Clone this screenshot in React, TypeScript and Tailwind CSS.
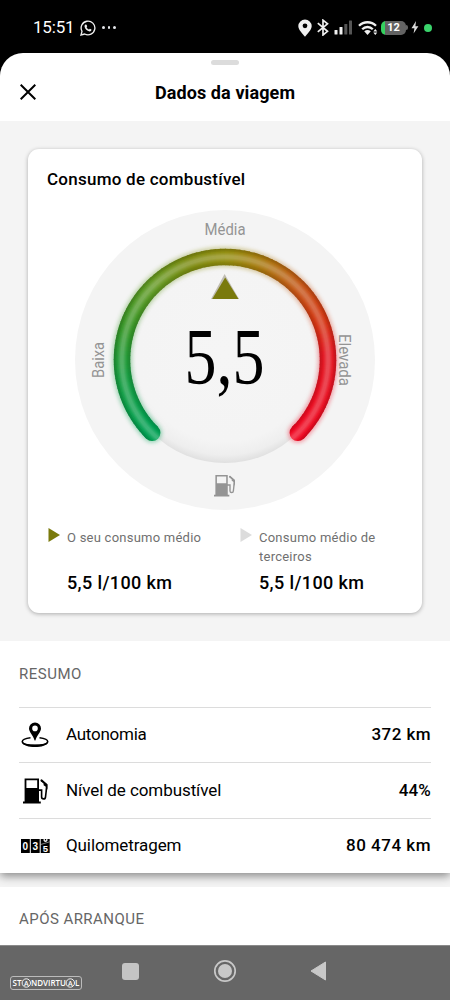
import type { ReactNode } from "react";

type RowData = {
  icon: ReactNode;
  label: string;
  value: string;
  labelClass: string;
  valueClass: string;
};

const CX = 153;
const CY = 153;
const R = 103;

// angle in degrees clockwise from the top
const STOPS: [number, number[]][] = [
  [-136, [0, 160, 84]],
  [-100, [24, 156, 64]],
  [-75, [52, 150, 40]],
  [-45, [98, 152, 34]],
  [-20, [125, 138, 16]],
  [0, [146, 140, 14]],
  [18, [166, 122, 14]],
  [45, [196, 84, 22]],
  [68, [212, 52, 20]],
  [85, [226, 24, 34]],
  [136, [240, 8, 34]],
];

function colorAt(a: number) {
  for (let i = 1; i < STOPS.length; i++) {
    const [a1, c1] = STOPS[i];
    const [a0, c0] = STOPS[i - 1];
    if (a <= a1) {
      const t = (a - a0) / (a1 - a0);
      return `rgb(${c0.map((v, k) => Math.round(v + (c1[k] - v) * t)).join(",")})`;
    }
  }
  return "rgb(240,8,34)";
}

function point(a: number) {
  const rad = (a * Math.PI) / 180;
  return `${(CX + R * Math.sin(rad)).toFixed(2)} ${(CY - R * Math.cos(rad)).toFixed(2)}`;
}

function arc(from: number, to: number) {
  return `M${point(from)} A${R} ${R} 0 ${to - from > 180 ? 1 : 0} 1 ${point(to)}`;
}

const START = -135;
const STEP = 2.5;
const segments = Array.from({ length: 108 }, (_, i) => START + i * STEP);

function ArcSegments({ width }: { width: number }) {
  return (
    <g fill="none" strokeWidth={width}>
      <path d={arc(-135, -134)} stroke={colorAt(-135)} strokeLinecap="round" />
      <path d={arc(134, 135)} stroke={colorAt(135)} strokeLinecap="round" />
      {segments.map((a) => (
        <path key={a} d={arc(a, Math.min(a + STEP + 0.5, 135))} stroke={colorAt(a)} />
      ))}
    </g>
  );
}

function Gauge() {
  return (
    <svg width="306" height="306" viewBox="0 0 306 306" className="block" fontFamily="Roboto, sans-serif">
      <defs>
        <radialGradient id="disc" gradientUnits="userSpaceOnUse" cx={CX} cy={CY - 8} r="112">
          <stop offset="0" stopColor="#f5f5f5" />
          <stop offset="0.8" stopColor="#f4f4f4" />
          <stop offset="0.92" stopColor="#eeeeee" />
          <stop offset="1" stopColor="#dedede" />
        </radialGradient>
        <radialGradient id="tube" gradientUnits="userSpaceOnUse" cx={CX} cy={CY} r="111.5">
          <stop offset="0.845" stopColor="#000" stopOpacity="0.16" />
          <stop offset="0.875" stopColor="#000" stopOpacity="0.04" />
          <stop offset="0.885" stopColor="#fff" stopOpacity="0.03" />
          <stop offset="0.915" stopColor="#fff" stopOpacity="0.22" />
          <stop offset="0.935" stopColor="#fff" stopOpacity="0.22" />
          <stop offset="0.965" stopColor="#fff" stopOpacity="0.02" />
          <stop offset="0.975" stopColor="#000" stopOpacity="0.06" />
          <stop offset="1" stopColor="#000" stopOpacity="0.18" />
        </radialGradient>
        <filter id="glow" x="-10%" y="-10%" width="120%" height="120%">
          <feGaussianBlur stdDeviation="2" />
        </filter>
      </defs>
      <circle cx={CX} cy={CY} r="150" fill="#f4f4f4" />
      <circle cx={CX} cy={CY} r={R} fill="url(#disc)" />
      <g filter="url(#glow)" opacity="0.4">
        <ArcSegments width={19.5} />
      </g>
      <ArcSegments width={16.5} />
      <path d={arc(-135, 135)} fill="none" stroke="url(#tube)" strokeWidth="16.5" strokeLinecap="round" />

      <path d="M152.6 67 L167 92 H139 Z" fill="#c0bdb2" />
      <path d="M153.2 70.5 L166.5 92 H140.2 Z" fill="#7a7a0c" />

      <g fill="#949494" fontSize="16">
        <text x="132.5" y="28" textLength="41" lengthAdjust="spacingAndGlyphs">Média</text>
        <text transform="translate(31.5 171) rotate(-90)" textLength="36" lengthAdjust="spacingAndGlyphs">Baixa</text>
        <text transform="translate(267 127) rotate(90)" textLength="52" lengthAdjust="spacingAndGlyphs">Elevada</text>
      </g>
      <text
        x="112.5"
        y="177"
        fontFamily="'Liberation Serif', serif"
        fontSize="80"
        textLength="80"
        lengthAdjust="spacingAndGlyphs"
      >
        5,5
      </text>
      <g transform="translate(142 268) scale(0.86)" color="#949494">
        <PumpShape />
      </g>
    </svg>
  );
}

function PumpShape() {
  return (
    <g fill="currentColor">
      <path fillRule="evenodd" d="M1.6 0 H16 V23 H17.8 V25 H0 V23 H1.6 Z M3.4 1.8 V9.6 H14.2 V1.8 Z" />
      <path
        d="M15 11.6 H18.6 V18.6 Q18.6 20.4 20.6 20.4 Q22.4 20.4 22.5 18.6 L23.6 9 V6.4 L18 1.8"
        fill="none"
        stroke="currentColor"
        strokeWidth="1.6"
      />
      <path d="M17.6 1.2 L18.8 0.8 L24.4 5.8 V10.5 L22.9 13 V8.2 L20.6 6.8 V4.6 L17.6 2.6 Z" />
    </g>
  );
}

function PumpIcon() {
  return (
    <svg width="30" height="26" viewBox="0 0 30 26">
      <g transform="translate(3 0.5)">
        <PumpShape />
      </g>
    </svg>
  );
}

function RangeIcon() {
  return (
    <svg width="30" height="26" viewBox="0 0 30 26">
      <path
        fillRule="evenodd"
        d="M15 0.5 a6 6 0 0 1 6 6 C21 10 17 13 15.4 18.5 h-0.8 C13 13 9 10 9 6.5 a6 6 0 0 1 6-6 Z M15 3.6 a2.8 2.8 0 1 0 0 5.6 a2.8 2.8 0 0 0 0-5.6 Z"
      />
      <path d="M10.5 15.8 C5.5 16.4 2.3 17.6 2.3 19.6 C2.3 22 8 23.6 15 23.6 C22 23.6 27.7 22 27.7 19.6 C27.7 17.6 24.5 16.4 19.5 15.8" fill="none" stroke="#000" strokeWidth="1.5" />
      <path d="M1.6 19.4 C2.5 23.4 9 25 15 25 C21 25 27.5 23.4 28.4 19.4 C26 22 21 22.6 15 22.6 C9 22.6 4 22 1.6 19.4 Z" />
    </svg>
  );
}

function OdometerIcon() {
  return (
    <svg width="30" height="14" viewBox="0 0 30 14" className="overflow-visible" fontFamily="'Liberation Sans', sans-serif" fontWeight="700">
      <rect x="1" width="8.8" height="14" />
      <rect x="10.8" width="8.9" height="14" />
      <rect x="20.7" width="9" height="14" />
      {/* last drum is mid-turn */}
      <path d="M23.6 0 H27.4 V1.6 Q27.2 3 25.5 3 Q23.8 3 23.6 1.6 Z" fill="#fff" />
      <path d="M24.8 0 H26.2 V1.4 H24.8 Z" />
      <path d="M20.7 5.5 L29.7 2.8" stroke="#fff" strokeWidth="0.5" />
      <g fill="#fff" fontSize="10" textAnchor="middle">
        <text x="5.4" y="10.6">0</text>
        <text x="15.2" y="10.6">3</text>
        <text x="25.4" y="13.4" fontSize="9.5">5</text>
      </g>
    </svg>
  );
}

const rows: RowData[] = [
  { icon: <RangeIcon />, label: "Autonomia", value: "372 km", labelClass: "tracking-[-0.25px]", valueClass: "tracking-[0.45px]" },
  { icon: <PumpIcon />, label: "Nível de combustível", value: "44%", labelClass: "tracking-[-0.08px]", valueClass: "tracking-[0.1px]" },
  { icon: <OdometerIcon />, label: "Quilometragem", value: "80 474 km", labelClass: "tracking-[-0.1px]", valueClass: "tracking-[0.5px]" },
];

function StatusBar() {
  return (
    <div className="flex h-[53px] shrink-0 items-center justify-between pr-[18px] pl-[33px] pt-[2px] text-white">
      <div className="flex items-center">
        <span className="w-[41px] text-[17px] tracking-[-0.2px] whitespace-nowrap">15:51</span>
        <svg width="16" height="16" viewBox="0 0 24 24" className="ml-[6px]" fill="none" stroke="#eee" strokeWidth="2">
          <path d="M1.5 22.5 L3 17 A10.3 10.3 0 1 1 7 21 Z" />
          <path d="M8.3 6.8 L9.8 7 L10.8 9.5 L9.8 11 C10.7 12.7 12 13.9 13.6 14.4 L14.8 13.1 L17.2 14.3 C17.3 16.4 15.8 17.3 14.4 17.2 C10.5 16.5 7.3 13 6.8 9.7 C6.8 8.2 7.4 7.2 8.3 6.8 Z" fill="#eee" stroke="none" />
        </svg>
        <div className="ml-[6px] flex gap-[3px]">
          <i className="size-[2.5px] rounded-full bg-gray-200" />
          <i className="size-[2.5px] rounded-full bg-gray-200" />
          <i className="size-[2.5px] rounded-full bg-gray-200" />
        </div>
      </div>
      <div className="flex items-center">
        <svg width="14" height="18" viewBox="0 0 14 18">
          <path fillRule="evenodd" fill="#f0f0f0" d="M7 0.5 A6.7 6.7 0 0 1 13.7 7 C13.7 11 9 15 7 17.8 C5 15 0.3 11 0.3 7 A6.7 6.7 0 0 1 7 0.5 Z M7 4.4 a2.4 2.4 0 1 0 0 4.8 a2.4 2.4 0 0 0 0-4.8 Z" />
        </svg>
        <svg width="12" height="17" viewBox="0 0 12 17" className="ml-[5px]" fill="none" stroke="#f0f0f0" strokeWidth="1.7">
          <path d="M0.8 4.2 L10.5 12.3 L6 16 V1.2 L10.5 4.8 L0.8 12.8" />
        </svg>
        <svg width="19" height="15" viewBox="0 0 19 15" className="ml-[5px]">
          <rect x="0.5" y="10" width="3" height="4.5" rx="0.5" fill="#f0f0f0" />
          <rect x="5.5" y="7" width="3" height="7.5" rx="0.5" fill="#f0f0f0" />
          <rect x="10.3" y="4" width="3" height="10.5" rx="0.5" fill="#555" />
          <rect x="15" y="0.5" width="3" height="14" rx="0.5" fill="#555" />
        </svg>
        <svg width="20" height="16" viewBox="0 0 20 16" className="ml-[5px]">
          <g fill="none" stroke="#f0f0f0" strokeWidth="2.3">
            <path d="M1 5.8 A12 12 0 0 1 18 5.8" />
            <path d="M4.2 9.2 A7.5 7.5 0 0 1 14.8 9.2" />
          </g>
          <path d="M6.2 11.2 Q9.5 8.8 12.8 11.2 L9.5 15 Z" fill="#f0f0f0" />
          <path d="M17.3 9 L19.3 11.4 H15.3 Z M17.3 15 L19.3 12.6 H15.3 Z" fill="#f0f0f0" />
        </svg>
        <div className="ml-[3px] flex h-[14px] w-[25px] items-center justify-center rounded-[5px] bg-linear-to-r from-[#35d05f] from-14% to-[#636363] to-14% text-[11px] leading-none font-bold">
          12
        </div>
        <div className="h-[5px] w-[2px] rounded-r bg-[#636363]" />
        <svg width="8" height="13" viewBox="0 0 8 13" className="ml-[3px]">
          <path d="M5 0 L0.5 7.2 H3.4 L2.6 12.6 L7.4 5.2 H4.4 Z" fill="#dadada" />
        </svg>
        <i className="ml-[5px] size-2 rounded-full bg-[#3ad36b]" />
      </div>
    </div>
  );
}

function Legend({ text, color }: { text: string; color: string }) {
  return (
    <div className="flex w-48 shrink-0 items-start">
      <svg width="12" height="14" viewBox="0 0 12 14" className="mr-[7px] shrink-0">
        <path d="M0.5 0 L12 7 L0.5 14 Z" fill={color} />
      </svg>
      <div>
        <p className="h-[45px] w-[140px] text-[13px] leading-[19px] tracking-[0.24px] text-[#707070]">{text}</p>
        <p className="text-[18px] leading-5 font-medium tracking-[0.38px] whitespace-nowrap">5,5 l/100 km</p>
      </div>
    </div>
  );
}

export default function App() {
  return (
    <div className="h-[1000px] w-[450px] overflow-hidden bg-black font-[Roboto,sans-serif] text-black">
      <div className="flex h-full flex-col">
        <StatusBar />

        <header className="flex h-[68px] shrink-0 flex-col items-center rounded-t-[23px] bg-white">
          <div className="mt-[7px] h-[5px] w-7 rounded-full bg-[#dcdcdc]" />
          <div className="mt-[15px] flex h-6 w-full items-center pl-5">
            <svg width="16" height="16" viewBox="0 0 16 16" stroke="#000" strokeWidth="2">
              <path d="M0.7 0.7 L15.3 15.3 M15.3 0.7 L0.7 15.3" />
            </svg>
            <h1 className="flex-1 pr-9 text-center text-[18px] font-bold tracking-[0.1px]">Dados da viagem</h1>
          </div>
        </header>

        <main className="flex min-h-0 flex-1 flex-col bg-[#f4f4f4]">
          <section className="mx-7 mt-7 h-[464px] shrink-0 rounded-[11px] bg-white shadow-[0_1px_4px_rgba(0,0,0,0.3)]">
            <h2 className="pt-[19px] pl-[19px] text-[17px] leading-[22px] font-medium tracking-[0.25px]">Consumo de combustível</h2>
            <div className="mt-[17px] ml-[44px]">
              <Gauge />
            </div>
            <div className="mt-[15px] flex pl-5">
              <Legend text="O seu consumo médio" color="#7a7a0c" />
              <Legend text="Consumo médio de terceiros" color="#dcdcdc" />
            </div>
          </section>

          {/* Resumo */}
          <section className="relative mt-7 h-[232px] shrink-0 bg-white px-[19px] shadow-[0_3px_9px_rgba(0,0,0,0.45)] [clip-path:inset(0_0_-14px_0)]">
            <h3 className="h-[66px] pt-[23px] text-[15px] leading-[21px] tracking-[0.5px] text-[#666]">RESUMO</h3>
            {rows.map((row) => (
              <div key={row.label} className="flex h-[55.4px] items-center border-t border-[#dcdcdc]">
                <div className="flex w-8 justify-center">{row.icon}</div>
                <span className={`ml-[15px] text-[17px] ${row.labelClass}`}>{row.label}</span>
                <span className={`ml-auto text-[17px] font-medium ${row.valueClass}`}>{row.value}</span>
              </div>
            ))}
          </section>

          <section className="mt-[14px] h-[58px] shrink-0 bg-white px-[19px] pt-[22px]">
            <h3 className="text-[15px] leading-[21px] tracking-[0.45px] text-[#666]">APÓS ARRANQUE</h3>
          </section>
        </main>

        <nav className="flex h-[55px] shrink-0 items-start border-t border-[#8a8a8a] bg-[#666]">
          <div className="mt-[30px] ml-[10px] flex h-[14px] w-[72px] items-center justify-center rounded-[3px] border border-[#bbb]">
            <svg width="68" height="12" viewBox="0 0 68 12" fill="#fff" fontFamily="'Open Sans', sans-serif" fontSize="8" fontWeight="600">
              <text x="0.5" y="9" textLength="9" lengthAdjust="spacingAndGlyphs">ST</text>
              <text x="12" y="8.6" fontSize="7">A</text>
              <circle cx="14.3" cy="6" r="4.2" fill="none" stroke="#fff" strokeWidth="0.9" />
              <text x="19" y="9" textLength="35" lengthAdjust="spacingAndGlyphs">NDVIRTU</text>
              <text x="56" y="8.6" fontSize="7">A</text>
              <circle cx="58.3" cy="6" r="4.2" fill="none" stroke="#fff" strokeWidth="0.9" />
              <text x="63" y="9">L</text>
            </svg>
          </div>
          <div className="mt-[17px] ml-[40px] size-[17px] rounded-[3px] bg-[#c4c4c4]" />
          <svg width="24" height="24" viewBox="0 0 24 24" className="mt-[13px] ml-[74px]">
            <circle cx="12" cy="12" r="10.2" fill="none" stroke="#c8c8c8" strokeWidth="1.7" />
            <circle cx="12" cy="12" r="7" fill="#c8c8c8" />
          </svg>
          <svg width="17" height="20" viewBox="0 0 17 20" className="mt-[15px] ml-[73px]">
            <path d="M15.5 1 V19 L1 10 Z" fill="#c8c8c8" stroke="#c8c8c8" strokeLinejoin="round" />
          </svg>
        </nav>
      </div>
    </div>
  );
}
